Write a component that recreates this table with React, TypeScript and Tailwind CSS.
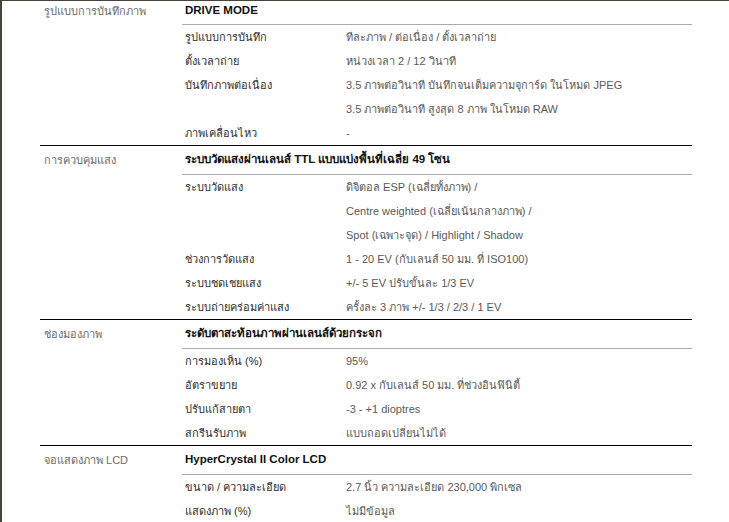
import React from "react";

type Spec = { key?: string; value: string };
type Section = { label: string; title: string; rows: Spec[] };

const sections: Section[] = [
  {
    label: "รูปแบบการบันทึกภาพ",
    title: "DRIVE MODE",
    rows: [
      { key: "รูปแบบการบันทึก", value: "ทีละภาพ / ต่อเนื่อง / ตั้งเวลาถ่าย" },
      { key: "ตั้งเวลาถ่าย", value: "หน่วงเวลา 2 / 12 วินาที" },
      {
        key: "บันทึกภาพต่อเนื่อง",
        value: "3.5 ภาพต่อวินาที บันทึกจนเต็มความจุการ์ด ในโหมด JPEG",
      },
      { value: "3.5 ภาพต่อวินาที สูงสุด 8 ภาพ ในโหมด RAW" },
      { key: "ภาพเคลื่อนไหว", value: "-" },
    ],
  },
  {
    label: "การควบคุมแสง",
    title: "ระบบวัดแสงผ่านเลนส์ TTL แบบแบ่งพื้นที่เฉลี่ย 49 โซน",
    rows: [
      { key: "ระบบวัดแสง", value: "ดิจิตอล ESP (เฉลี่ยทั้งภาพ) /" },
      { value: "Centre weighted (เฉลี่ยเน้นกลางภาพ) /" },
      { value: "Spot (เฉพาะจุด) / Highlight / Shadow" },
      { key: "ช่วงการวัดแสง", value: "1 - 20 EV (กับเลนส์ 50 มม. ที่ ISO100)" },
      { key: "ระบบชดเชยแสง", value: "+/- 5 EV ปรับขั้นละ 1/3 EV" },
      { key: "ระบบถ่ายคร่อมค่าแสง", value: "ครั้งละ 3 ภาพ +/- 1/3 / 2/3 / 1 EV" },
    ],
  },
  {
    label: "ช่องมองภาพ",
    title: "ระดับตาสะท้อนภาพผ่านเลนส์ด้วยกระจก",
    rows: [
      { key: "การมองเห็น (%)", value: "95%" },
      { key: "อัตราขยาย", value: "0.92 x กับเลนส์ 50 มม. ที่ช่วงอินฟินิตี้" },
      { key: "ปรับแก้สายตา", value: "-3 - +1 dioptres" },
      { key: "สกรีนรับภาพ", value: "แบบถอดเปลี่ยนไม่ได้" },
    ],
  },
  {
    label: "จอแสดงภาพ LCD",
    title: "HyperCrystal II Color LCD",
    rows: [
      { key: "ขนาด / ความละเอียด", value: "2.7 นิ้ว ความละเอียด 230,000 พิกเซล" },
      { key: "แสดงภาพ (%)", value: "ไม่มีข้อมูล" },
    ],
  },
];

const SpecSection: React.FC<{ section: Section; first: boolean }> = ({
  section,
  first,
}) => {
  return (
    <div className={first ? "flex" : "flex border-t border-black"}>
      <div
        className={
          first
            ? "w-[142px] shrink-0 pl-[4px] h-[23px] pb-[3px] flex items-center text-[#6b6b6b]"
            : "w-[142px] shrink-0 pl-[4px] h-[28px] flex items-center text-[#6b6b6b]"
        }
      >
        {section.label}
      </div>
      <div className="flex-1">
        <div
          className={
            first
              ? "h-[24px] pl-[3px] pb-[4px] flex items-center font-bold text-[11.5px] text-[#111] border-b border-[#ababab]"
              : "h-[29px] pl-[3px] flex items-center font-bold text-[11.5px] text-[#111] border-b border-[#ababab]"
          }
        >
          {section.title}
        </div>
        {section.rows.map((row, i) => (
          <div key={i} className="h-[24px] flex items-center pl-[3px]">
            <div className="w-[161px] shrink-0 text-[#2e2e2e]">{row.key}</div>
            <div className="text-[#5a5a5a]">{row.value}</div>
          </div>
        ))}
      </div>
    </div>
  );
};

export default function App() {
  return (
    <div
      className="w-[729px] h-[522px] overflow-hidden bg-white border-l-2 border-t border-[#45453c] text-[11px] leading-none"
      style={{ fontFamily: '"Liberation Sans", "DejaVu Sans", sans-serif' }}
    >
      <div className="ml-[38px] w-[652px]">
        {sections.map((s, i) => (
          <SpecSection key={i} section={s} first={i === 0} />
        ))}
      </div>
    </div>
  );
}
